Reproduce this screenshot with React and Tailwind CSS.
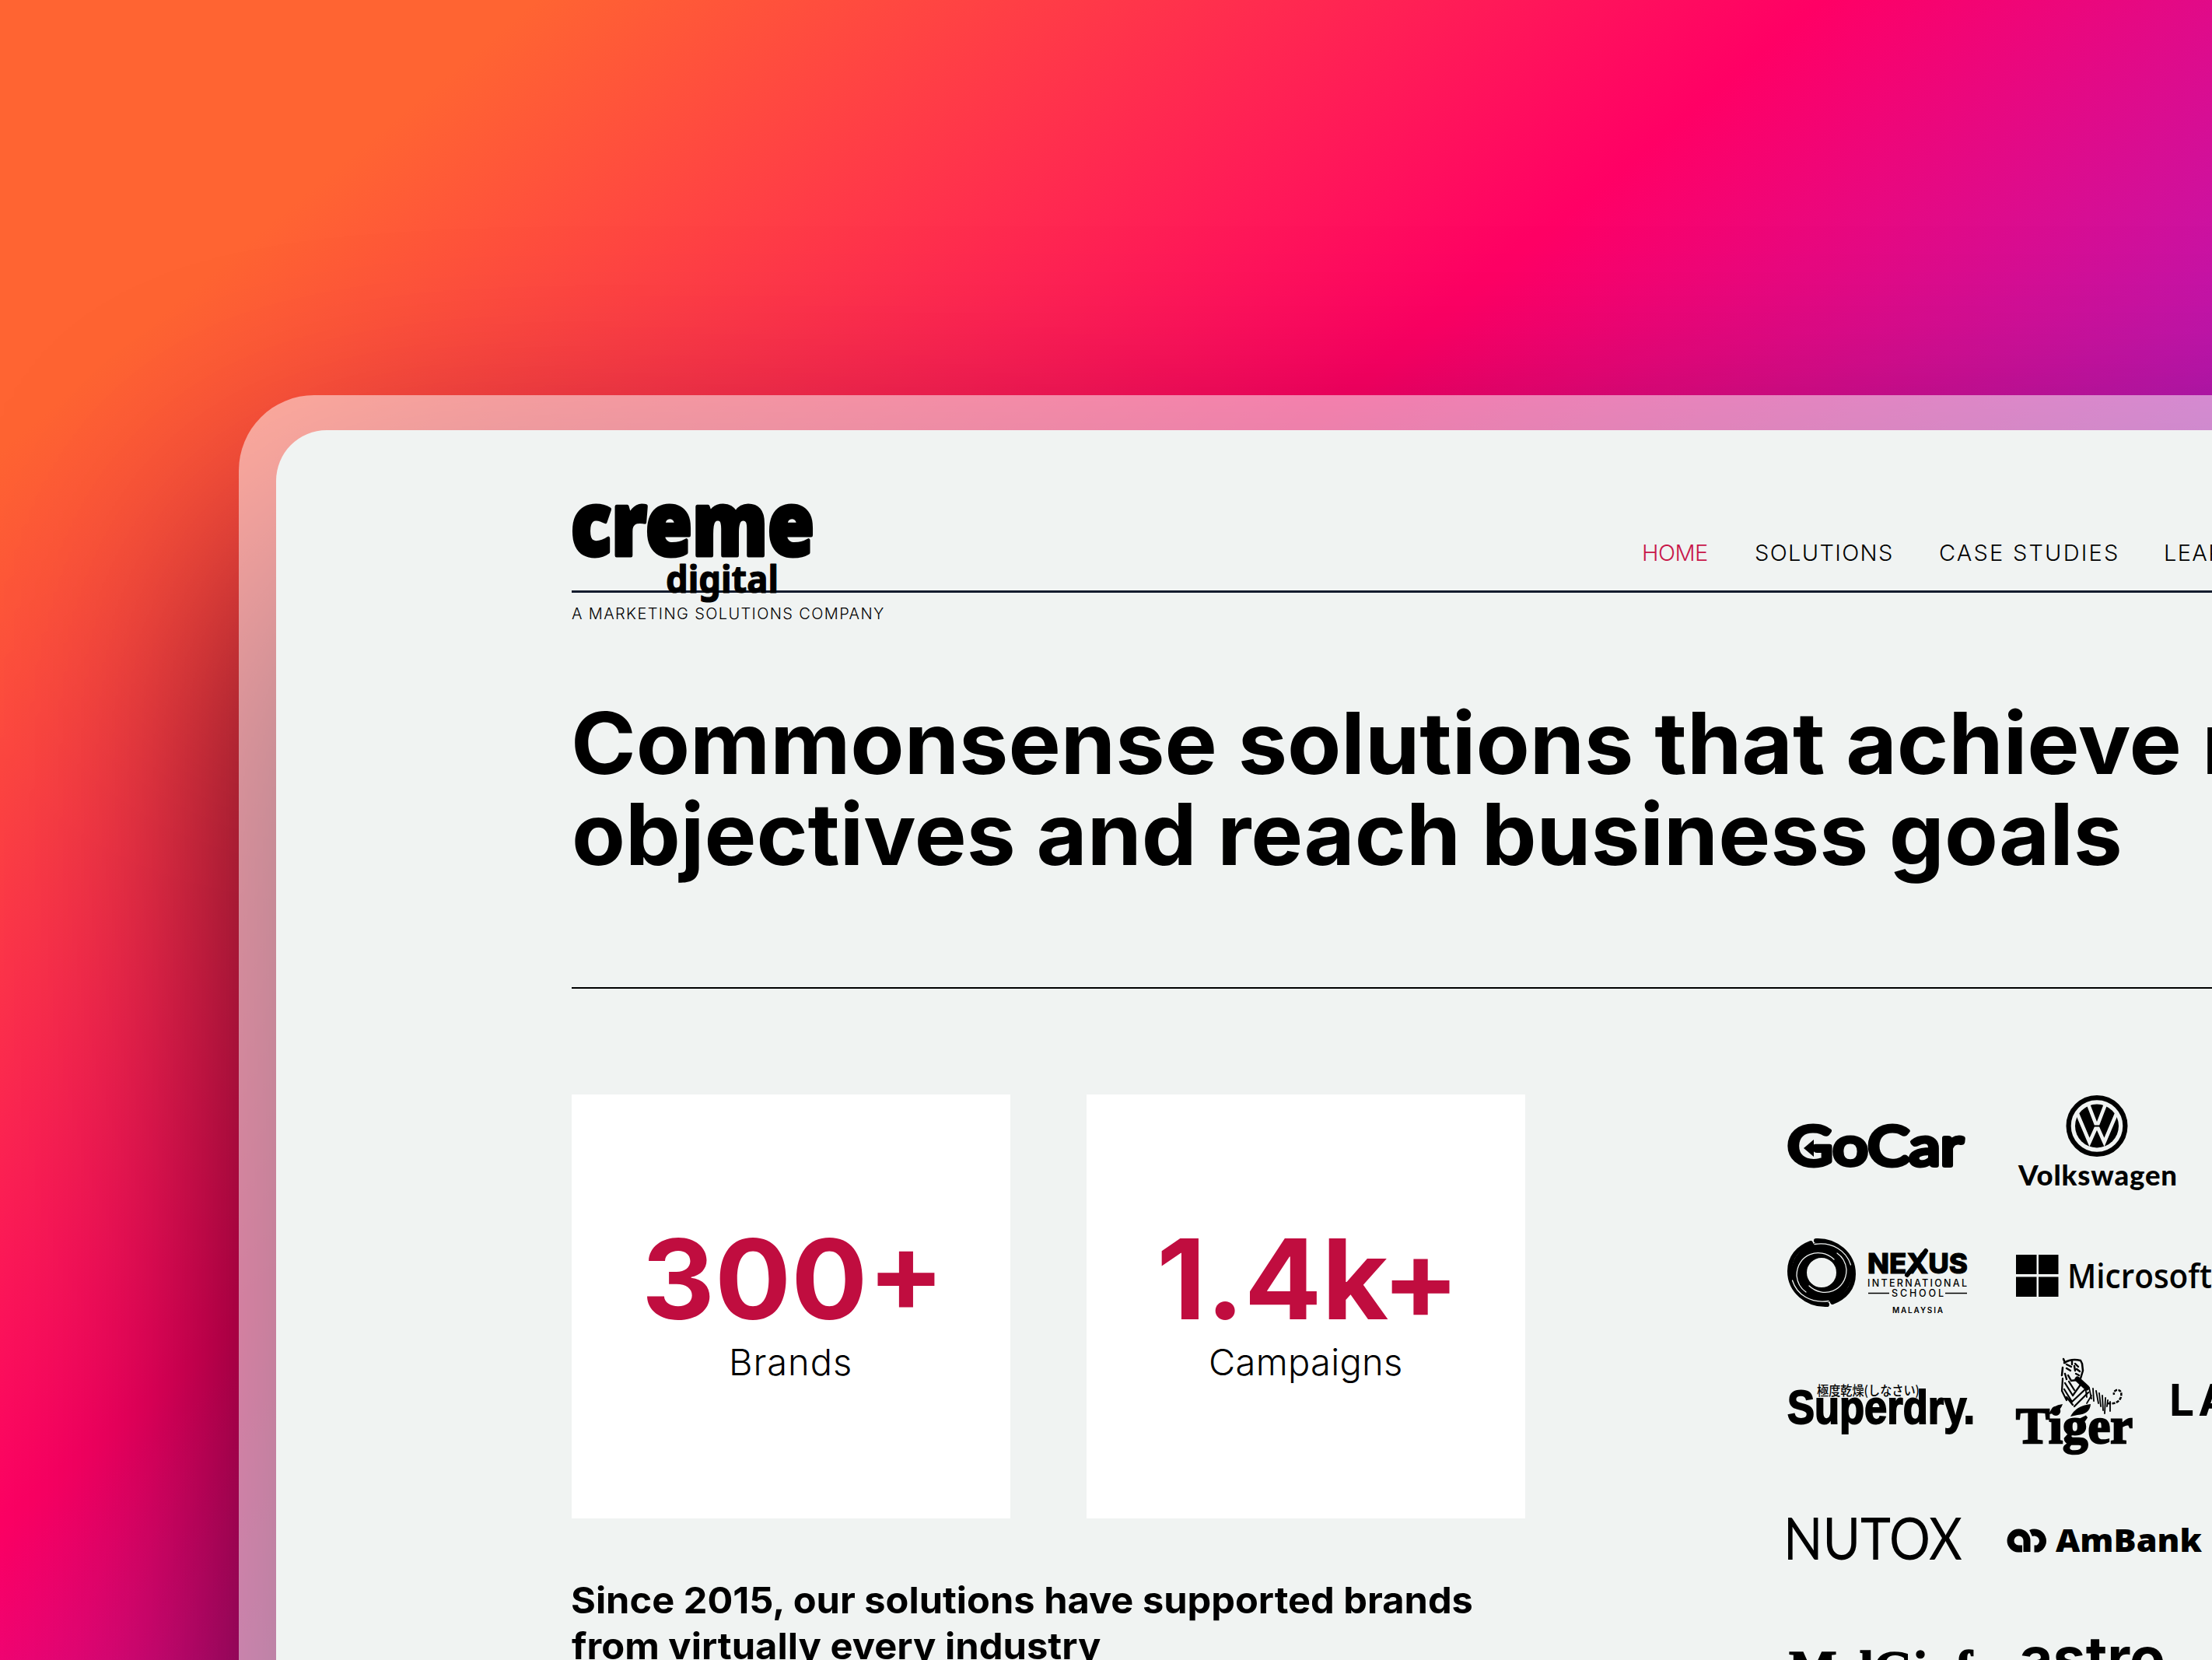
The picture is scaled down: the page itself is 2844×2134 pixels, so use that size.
import { useLayoutEffect, useRef, useState } from "react";

// Single line of text whose visible ink starts at the box's left edge and spans `w` pixels,
// reached by letter spacing, or by widening the glyphs when `stretch` is set.
function Line({ w, stretch = false, className = "", children }) {
  const ref = useRef(null);
  const [fit, setFit] = useState({});
  useLayoutEffect(() => {
    const cs = getComputedStyle(ref.current);
    const ctx = document.createElement("canvas").getContext("2d");
    ctx.font = `${cs.fontWeight} ${cs.fontSize} ${cs.fontFamily}`;
    const m = ctx.measureText(children);
    const spaces = children.split(" ").length - 1;
    const ink = m.actualBoundingBoxLeft + m.actualBoundingBoxRight + spaces * (parseFloat(cs.wordSpacing) || 0);
    const left = m.actualBoundingBoxLeft;
    if (stretch) {
      const k = w / ink;
      setFit({ transform: `scaleX(${k})`, transformOrigin: "0 0", marginLeft: left * k });
    } else {
      setFit({ letterSpacing: (w - ink) / (children.length - 1), marginLeft: left });
    }
  }, [w, stretch, children]);
  return (
    <span className={"block shrink-0 whitespace-nowrap " + className} style={{ width: w }}>
      <span ref={ref} className="inline-block" style={fit}>
        {children}
      </span>
    </span>
  );
}

function CremeLogo() {
  return (
    <svg width="313" height="132" viewBox="0 0 313 132" className="block shrink-0 overflow-visible">
      <g fontFamily="'Noto Sans', sans-serif" stroke="#000" strokeLinejoin="round">
        <text x="-1" y="67" fontSize="114" fontWeight="900" strokeWidth="5" textLength="313" lengthAdjust="spacingAndGlyphs">
          creme
        </text>
        <text x="121" y="114.500" fontSize="49" fontWeight="700" strokeWidth="1.200" textLength="145" lengthAdjust="spacingAndGlyphs">
          digital
        </text>
      </g>
    </svg>
  );
}

function GoCar() {
  return (
    <svg width="230" height="60" viewBox="0 0 230 60" className="block overflow-visible">
      <text x="0" y="55" fontFamily="Lato, sans-serif" fontSize="70" fontWeight="400" stroke="#000" strokeWidth="6" strokeLinejoin="round" textLength="226" lengthAdjust="spacingAndGlyphs">
        GoCar
      </text>
      <path d="M21 33 L34 22 V44 Z" />
    </svg>
  );
}

function Volkswagen() {
  return (
    <svg width="204" height="124" viewBox="0 0 204 124" className="block overflow-visible">
      <g transform="translate(101 40.500)">
        <circle r="36.4" fill="none" stroke="#000" strokeWidth="6.2" />
        <circle r="28" />
        <g fill="none" stroke="#f0f3f2" strokeWidth="4.6" strokeLinejoin="miter">
          <path d="M-11.5 -29 L-1.6 -3.2 H1.6 L11.5 -29" />
          <path d="M-26 -18 L-9.5 21 L-1.6 3.4 H1.6 L9.5 21 L26 -18" />
        </g>
      </g>
      <text x="0" y="117" fontFamily="Lato, sans-serif" fontSize="36.5" fontWeight="900" textLength="204" lengthAdjust="spacing">
        Volkswagen
      </text>
    </svg>
  );
}

function Nexus() {
  return (
    <svg width="232" height="98" viewBox="0 0 232 98" className="block overflow-visible">
      <g transform="translate(44 45)" fill="none" strokeLinecap="round">
        <circle r="29" stroke="#000" strokeWidth="20" />
        <path d="M-7 -41 C18 -42 41 -24 41 2 C41 20 30 32 14 38" stroke="#000" strokeWidth="6" />
        <path d="M7 41 C-18 42 -41 24 -41 -2 C-41 -20 -30 -32 -14 -38" stroke="#000" strokeWidth="6" />
        <path d="M-9 -36.5 C14 -40 32 -28 37.500 -10" stroke="#f0f3f2" strokeWidth="1.3" />
        <path d="M9 36.500 C-14 40 -32 28 -37.500 10" stroke="#f0f3f2" strokeWidth="1.3" />
        <path d="M16 -17 C-2 -34 -32 -24 -32 4 C-31 14 -26 21 -20 25" stroke="#f0f3f2" strokeWidth="1.3" />
        <path d="M-16 17 C2 34 32 24 32 -4 C31 -14 26 -21 20 -25" stroke="#f0f3f2" strokeWidth="1.3" />
      </g>
      <text x="103" y="45.500" fontFamily="Inter, sans-serif" fontSize="36" fontWeight="800" textLength="129" lengthAdjust="spacingAndGlyphs" stroke="#000">
        NEXUS
      </text>
      <path d="M154 48 L178 17" stroke="#000" strokeWidth="6" strokeLinecap="round" />
      <g fontFamily="Inter, sans-serif" fontWeight="500">
        <text x="103" y="63" fontSize="12.500" textLength="128">INTERNATIONAL</text>
        <text x="134" y="75.500" fontSize="12.500" textLength="67">SCHOOL</text>
        <text x="135" y="97" fontSize="10" fontWeight="600" textLength="65">MALAYSIA</text>
      </g>
      <path d="M104 71.500 H131 M203 71.500 H231" stroke="#000" strokeWidth="1.600" />
    </svg>
  );
}

function Microsoft() {
  return (
    <svg width="254" height="56" viewBox="0 0 254 56" className="block overflow-visible">
      <path d="M0 0 H26.500 V25 H0 Z M29 0 H54.500 V25 H29 Z M0 28.500 H26.500 V54 H0 Z M29 28.500 H54.500 V54 H29 Z" />
      <text x="66" y="43" fontFamily="'Open Sans', sans-serif" fontSize="43" fontWeight="600" textLength="186" lengthAdjust="spacingAndGlyphs">
        Microsoft
      </text>
    </svg>
  );
}

function Superdry() {
  return (
    <svg width="240" height="66" viewBox="0 0 240 66" className="block overflow-visible">
      <text x="38" y="15" fontFamily="'Noto Sans CJK JP', sans-serif" fontSize="16.500" fontWeight="500" textLength="132" lengthAdjust="spacingAndGlyphs">
        極度乾燥(しなさい)
      </text>
      <text x="0" y="51" fontFamily="'Liberation Sans', sans-serif" fontSize="61" fontWeight="700" stroke="#000" strokeWidth="2" textLength="241" lengthAdjust="spacingAndGlyphs">
        Superdry.
      </text>
    </svg>
  );
}

function Tiger() {
  return (
    <svg width="152" height="134" viewBox="0 0 152 134" className="block overflow-visible">
      <g fill="none" stroke="#000" strokeLinecap="round">
        <path d="M62 3 L64 8 M61 14 L60 24 M63 8 Q72 2 84 5 L86 9 L87 18 L84 28" strokeWidth="2.500" />
        <path d="M66 10 L72 13 M77 9 L81 13 M66 15 L71 18 M79 16 L83 19 M73 6 V10 M76 12 L77 18" strokeWidth="2.400" />
        <path d="M64 22 L66 29 M68 24 L72 31 L80 30 M78 22 L82 24" strokeWidth="2.400" />
        <path d="M61 28 L60 44 L66 56 M64 34 L74 50 M63 42 L73 58 M69 32 L76 43 M74 50 L84 36 M73 58 L90 42 M76 64 L94 46 M66 52 L74 62" strokeWidth="2.200" />
        <path d="M80 29 L92 40" strokeWidth="7" />
        <path d="M90 38 L92 52 M95 40 L98 54 M100 41 L101 57 M104 44 L107 60 M108 47 L110 64 M112 50 L113 69 M116 53 L115 73 M119 56 L118 64 M98 50 L92 60 M122 58 V70" strokeWidth="1.800" />
        <path d="M119 60 Q132 62 136 52 Q138 42 130 43 Q126 45 127 49" strokeWidth="2.500" strokeDasharray="4 1.500" strokeLinecap="butt" />
      </g>
      <text x="1" y="111" fontFamily="'Liberation Serif', serif" fontSize="65" fontWeight="700" stroke="#000" strokeWidth="2.400" textLength="150" lengthAdjust="spacingAndGlyphs">
        Tiger
      </text>
      <path d="M43 74 Q48 62 61 61 Q57 73 43 74 Z M71 77 Q78 63 97 61 Q96 74 80 75 Z" />
    </svg>
  );
}

function AmBank() {
  return (
    <svg width="252" height="34" viewBox="0 0 252 34" className="block overflow-visible">
      <g fill="none" stroke="#000" strokeWidth="9">
        <path d="M27 30 V15.500 A10.500 10.500 0 1 0 16 26 H21" />
        <path d="M32 6 A10.500 10.500 0 1 1 41 26 H36.500" />
      </g>
      <text x="64" y="30" fontFamily="'Open Sans', sans-serif" fontSize="40.500" fontWeight="800" textLength="188" lengthAdjust="spacingAndGlyphs">
        AmBank
      </text>
    </svg>
  );
}

function Nutox() {
  return (
    <svg width="226" height="60" viewBox="0 0 226 60" className="block overflow-visible">
      <text x="-5" y="57" fontFamily="Lato, sans-serif" fontSize="75" fontWeight="400" textLength="230" lengthAdjust="spacingAndGlyphs">
        NUTOX
      </text>
    </svg>
  );
}

function MelGinf() {
  return (
    <svg width="240" height="60" viewBox="0 0 240 60" className="block overflow-visible">
      <text x="2" y="68" fontFamily="'Liberation Serif', serif" fontSize="64" fontWeight="700" stroke="#000" strokeWidth="1.500" textLength="236" lengthAdjust="spacingAndGlyphs">
        MelGinf
      </text>
    </svg>
  );
}

function Stat({ value, label, valueWidth, labelWidth }) {
  return (
    <div className="flex h-[545px] w-[564px] flex-col items-center bg-white pt-[152px]">
      <Line stretch w={valueWidth} className="text-[143px] leading-[170px] font-bold text-[#c00d3f]">
        {value}
      </Line>
      <Line w={labelWidth} className="-mt-[10px] text-[47px] leading-[64px] font-[350]">
        {label}
      </Line>
    </div>
  );
}

function Page() {
  return (
    <div className="relative h-full w-[2700px] shrink-0 rounded-tl-[65px] bg-[#f0f3f2] pt-[94px] pl-[380px] font-['Inter',sans-serif] text-black">
      <header className="flex h-[115px] items-start border-b-[3px] border-[#141c2e]">
        <CremeLogo />
        <nav className="mt-[44px] ml-[1065px] flex gap-[62px] text-[29px] leading-[40px] font-[350]">
          <Line w={82} className="text-[#c8174a]">HOME</Line>
          <Line w={175}>SOLUTIONS</Line>
          <Line w={228}>CASE STUDIES</Line>
          <Line w={95}>LEARN</Line>
        </nav>
      </header>
      <Line w={401} className="mt-[12px] text-[20px] leading-[30px] font-[350]">
        A MARKETING SOLUTIONS COMPANY
      </Line>

      <h1 className="mt-[93px] ml-[4px] text-[110px] leading-[117px] font-bold">
        <div className="flex gap-[36px]">
          <Line stretch w={2062}>Commonsense solutions that achieve</Line>
          <Line stretch w={560}>marketing</Line>
        </div>
        <Line stretch w={1986}>objectives and reach business goals</Line>
      </h1>

      <div className="mt-[138px] h-[2px] bg-black" />

      <div className="mt-[136px] flex">
        <div className="w-[1563px]">
          <div className="flex gap-[98px]">
            <Stat value="300+" label="Brands" valueWidth={371} labelWidth={152} />
            <Stat value="1.4k+" label="Campaigns" valueWidth={371} labelWidth={244} />
          </div>
          <div className="mt-[75px] text-[47px] leading-[59px] font-bold">
            <Line stretch w={1159}>Since 2015, our solutions have supported brands</Line>
            <Line stretch w={680}>from virtually every industry</Line>
          </div>
        </div>

        <div className="flex flex-col">
          <div className="flex h-[124px] gap-[65px]">
            <div className="w-[232px] pt-[36px]"><GoCar /></div>
            <Volkswagen />
          </div>
          <div className="mt-[60px] flex h-[98px] gap-[62px]">
            <Nexus />
            <div className="pt-[22px]"><Microsoft /></div>
          </div>
          <div className="mt-[55px] flex h-[134px]">
            <div className="w-[293px] pt-[35px]"><Superdry /></div>
            <Tiger />
            <div className="ml-[46px] pt-[26px] text-[57px] leading-[60px] font-bold tracking-[5px]">LA</div>
          </div>
          <div className="mt-[70px] flex h-[60px]">
            <div className="w-[281px]"><Nutox /></div>
            <div className="pt-[17px]"><AmBank /></div>
          </div>
          <div className="mt-[90px] flex h-[60px]">
            <div className="w-[300px]"><MelGinf /></div>
            <Line w={184} className="-mt-[12px] text-[75px] leading-[90px] font-bold">astro</Line>
          </div>
        </div>
      </div>
    </div>
  );
}

export default function App() {
  return (
    <div className="h-[2134px] w-[2844px] overflow-hidden bg-[linear-gradient(140deg,#ff6432_12.8%,#ff0065_43.52%,#7b2eff_84.34%)]">
      <div className="grid w-[3900px] pt-[508px] pl-[307px]">
        <div className="col-start-1 row-start-1 mt-[222px] ml-[48px] h-[2400px] rounded-tl-[65px] bg-black/88 blur-[185px]" />
        <div className="relative col-start-1 row-start-1 flex h-[2400px] rounded-tl-[97px] bg-white/50 pt-[45px] pl-[48px]">
          <Page />
        </div>
      </div>
    </div>
  );
}
